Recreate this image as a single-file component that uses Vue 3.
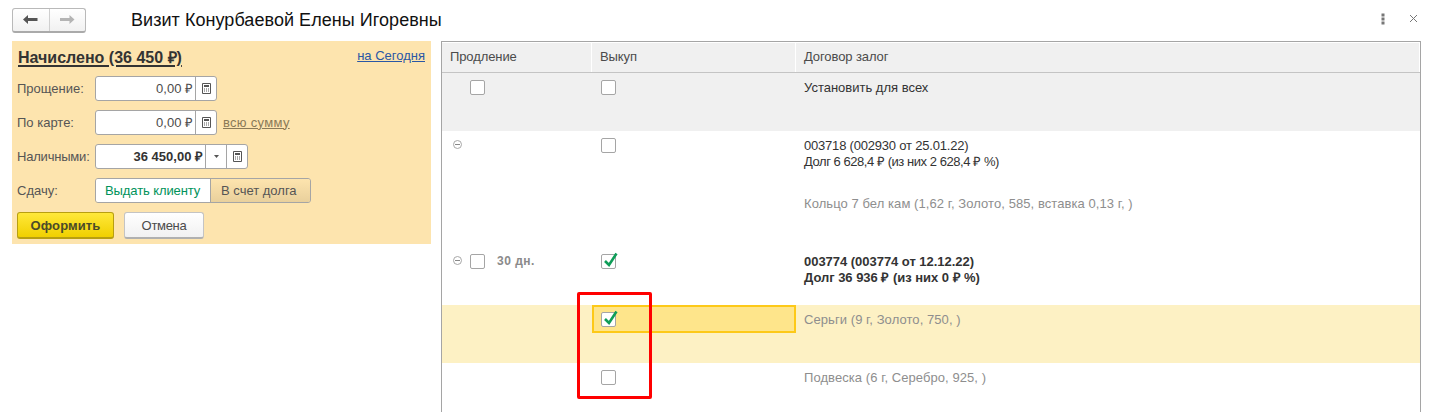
<script setup>
</script>

<template>
  <div class="page">
    <header class="top">
      <div class="nav">
        <button class="nav-btn">
          <svg width="15" height="9" viewBox="0 0 15 9"><path d="M0 4.5 L5 0 V3 H14.5 V6 H5 V9 Z" fill="#555" /></svg>
        </button>
        <button class="nav-btn">
          <svg width="15" height="9" viewBox="0 0 15 9"><path d="M14.5 4.5 L9.5 0 V3 H0 V6 H9.5 V9 Z" fill="#b4b4b4" /></svg>
        </button>
      </div>
      <h1 class="title">Визит Конурбаевой Елены Игоревны</h1>
      <div class="win">
        <svg width="4" height="12" viewBox="0 0 4 12"><path d="M0.5 0.5h3v3h-3zM0.5 4.5h3v3h-3zM0.5 8.5h3v3h-3z" fill="#777" /></svg>
        <svg width="9" height="9" viewBox="0 0 9 9"><path d="M1 1 L8 8 M8 1 L1 8" stroke="#777" stroke-width="1" fill="none" /></svg>
      </div>
    </header>

    <main class="content">
      <section class="pay">
        <div class="pay-head">
          <span class="accrued">Начислено (36 450 ₽)</span>
          <a class="today">на Сегодня</a>
        </div>

        <div class="form-row">
          <span class="lbl">Прощение:</span>
          <div class="field w-short">
            <span class="val">0,00 ₽</span>
            <span class="fbtn"><svg class="calc" viewBox="0 0 9 11"><path d="M0.5 0.5h8v10h-8z" fill="none" stroke="#555" /><path d="M2 2h5v2H2zM2 5.5h1v1H2zM4 5.5h1v1H4zM6 5.5h1v1H6zM2 7.5h1v1H2zM4 7.5h1v1H4zM6 7.5h1v1H6z" fill="#555" /></svg></span>
          </div>
        </div>

        <div class="form-row">
          <span class="lbl">По карте:</span>
          <div class="field w-short">
            <span class="val">0,00 ₽</span>
            <span class="fbtn"><svg class="calc" viewBox="0 0 9 11"><path d="M0.5 0.5h8v10h-8z" fill="none" stroke="#555" /><path d="M2 2h5v2H2zM2 5.5h1v1H2zM4 5.5h1v1H4zM6 5.5h1v1H6zM2 7.5h1v1H2zM4 7.5h1v1H4zM6 7.5h1v1H6z" fill="#555" /></svg></span>
          </div>
          <a class="all">всю сумму</a>
        </div>

        <div class="form-row">
          <span class="lbl lbl-tight">Наличными:</span>
          <div class="field w-long">
            <span class="val bold">36 450,00 ₽</span>
            <span class="fbtn"><svg width="5" height="3" viewBox="0 0 5 3"><path d="M0 0h5L2.5 3z" fill="#555" /></svg></span>
            <span class="fbtn"><svg class="calc" viewBox="0 0 9 11"><path d="M0.5 0.5h8v10h-8z" fill="none" stroke="#555" /><path d="M2 2h5v2H2zM2 5.5h1v1H2zM4 5.5h1v1H4zM6 5.5h1v1H6zM2 7.5h1v1H2zM4 7.5h1v1H4zM6 7.5h1v1H6z" fill="#555" /></svg></span>
          </div>
        </div>

        <div class="form-row">
          <span class="lbl">Сдачу:</span>
          <div class="toggle">
            <span class="opt on">Выдать клиенту</span>
            <span class="opt off">В счет долга</span>
          </div>
        </div>

        <div class="actions">
          <button class="primary">Оформить</button>
          <button class="cancel">Отмена</button>
        </div>
      </section>

      <section class="table">
        <div class="thead">
          <div class="th">Продление</div>
          <div class="th">Выкуп</div>
          <div class="th last">Договор залог</div>
        </div>

        <div class="row r-all">
          <div class="c1"><span class="cb cb-all"></span></div>
          <div class="c2"><span class="cb"></span></div>
          <div class="c3 dark">Установить для всех</div>
        </div>

        <div class="row r-a">
          <div class="c1"><span class="minus"></span></div>
          <div class="c2"><span class="cb"></span></div>
          <div class="c3">
            <div class="dark num">003718 (002930 от 25.01.22)</div>
            <div class="dark debt">Долг 6 628,4 ₽ (из них 2 628,4 ₽ %)</div>
            <div class="grey item-a">Кольцо 7 бел кам (1,62 г, Золото, 585, вставка 0,13 г, )</div>
          </div>
        </div>

        <div class="row r-b">
          <div class="c1">
            <span class="minus"></span>
            <span class="cb cb-in"></span>
            <b class="days">30 дн.</b>
          </div>
          <div class="c2">
            <span class="cb">
              <svg class="tick" viewBox="0 0 16 15"><path d="M3 9 L7 13 L14.5 1.5" fill="none" stroke="#0f9d58" stroke-width="2.6" /></svg>
            </span>
          </div>
          <div class="c3 strong">003774 (003774 от 12.12.22)<br />Долг 36 936 ₽ (из них 0 ₽ %)</div>
        </div>

        <div class="row r-sel">
          <div class="c1"></div>
          <div class="c2 current">
            <span class="cb">
              <svg class="tick" viewBox="0 0 16 15"><path d="M3 9 L7 13 L14.5 1.5" fill="none" stroke="#0f9d58" stroke-width="2.6" /></svg>
            </span>
          </div>
          <div class="c3 grey sel-text">Серьги (9 г, Золото, 750, )</div>
        </div>

        <div class="row r-last">
          <div class="c1"></div>
          <div class="c2"><span class="cb"></span></div>
          <div class="c3 grey">Подвеска (6 г, Серебро, 925, )</div>
        </div>
      </section>
    </main>

    <div class="highlight"></div>
  </div>
</template>

<style>
html, body { margin: 0; background: #fff; overflow: hidden; }
</style>

<style scoped>
.page {
  position: relative;
  width: 1439px;
  height: 412px;
  overflow: hidden;
  background: #fff;
  font-family: "Liberation Sans", Arial, sans-serif;
  font-size: 13px;
  color: #4b4b4b;
}
.top { display: flex; align-items: center; height: 41px; padding-left: 12px; box-sizing: border-box; }
.nav {
  display: flex; width: 74px; height: 25px; box-sizing: border-box;
  border: 1px solid #b9b9b9; border-bottom: 2px solid #aaa; border-radius: 3px;
  background: linear-gradient(#fff, #f1f1f1); margin-top: -1px;
}
.nav-btn { flex: 1; border: 0; padding: 0; background: none; display: flex; align-items: center; justify-content: center; }
.nav-btn + .nav-btn { border-left: 1px solid #cfcfcf; }
.title { margin: 0 0 0 45px; font-size: 18px; font-weight: 400; color: #111; white-space: nowrap; letter-spacing: 0.05px; }
.win { margin-left: auto; display: flex; align-items: center; gap: 24px; padding-right: 21px; margin-top: -4px; }

.content { display: flex; align-items: flex-start; padding-left: 12px; gap: 10px; }

.pay { width: 419px; height: 203px; background: #fde4ae; box-sizing: border-box; padding: 0 5px; flex: none; }
.pay-head { display: flex; justify-content: space-between; align-items: center; height: 30px; padding: 2px 1px 0; box-sizing: border-box; }
.accrued { font-size: 16px; font-weight: 700; color: #333; text-decoration: underline; text-decoration-thickness: 2px; text-underline-offset: 2px; }
.today { color: #2a57a5; text-decoration: underline; margin-bottom: 3px; }
.form-row { display: flex; align-items: center; height: 34px; }
.lbl { width: 78px; flex: none; color: #555; }
.lbl-tight { letter-spacing: -0.2px; }
.field {
  display: flex; height: 25px; box-sizing: border-box; background: #fff;
  border: 1px solid #a5a5a5; border-radius: 3px;
}
.w-short { width: 122px; }
.w-long { width: 153px; }
.val { flex: 1; text-align: right; line-height: 23px; padding-right: 2px; color: #4b4b4b; white-space: nowrap; }
.bold { font-weight: 700; color: #333; }
.fbtn { flex: none; width: 20px; border-left: 1px solid #a5a5a5; display: flex; align-items: center; justify-content: center; }
.calc { width: 9px; height: 11px; }
.all { margin-left: 6px; color: #8a7a58; text-decoration: underline; letter-spacing: 0.3px; }
.toggle { display: flex; height: 25px; box-sizing: border-box; border: 1px solid #a5a5a5; border-radius: 3px; overflow: hidden; }
.opt { line-height: 23px; white-space: nowrap; box-sizing: border-box; }
.on { background: #fff; color: #00925a; width: 114px; padding-left: 9px; letter-spacing: -0.1px; }
.off { background: linear-gradient(#fde4ae, #e9d09c); border-left: 1px solid #a5a5a5; color: #555; width: 100px; padding-left: 10px; }
.actions { display: flex; gap: 10px; margin-top: 5px; }
.primary, .cancel { height: 27px; border-radius: 3px; box-sizing: border-box; font: inherit; padding: 0; }
.primary {
  width: 97px; font-weight: 700; color: #4b4b29; letter-spacing: 0.1px;
  background: linear-gradient(#ffe83a, #f0d000); border: 1px solid #b89f10; border-bottom-width: 2px;
}
.cancel {
  width: 80px; color: #4b4b4b; letter-spacing: -0.3px;
  background: linear-gradient(#fff, #f1f1f1); border: 1px solid #c4c4c4; border-bottom: 2px solid #b0b0b0;
}

.table { flex: none; width: 980px; border: 1px solid #a5a5a5; border-bottom: 0; box-sizing: border-box; height: 371px; overflow: hidden; }
.thead { display: grid; grid-template-columns: 150px 204px 1fr; height: 31px; box-sizing: border-box; background: #f0f0f0; border-bottom: 1px solid #c4c4c4; }
.th { line-height: 30px; padding-left: 8px; border-right: 1px solid #fff; box-sizing: border-box; color: #4b4b4b; letter-spacing: -0.1px; box-shadow: inset 0 1px 0 #fff; }
.row { display: grid; grid-template-columns: 150px 204px 1fr; box-sizing: border-box; }
.c1 { display: flex; align-items: flex-start; }
.c2 { display: flex; align-items: flex-start; padding-left: 9px; }
.c3 { padding-left: 8px; line-height: 16px; white-space: nowrap; }
.r-all { height: 58px; background: #f0f0f0; padding-top: 7px; }
.r-a { height: 114px; padding-top: 7px; }
.r-b { height: 60px; padding-top: 9px; }
.r-sel { height: 58px; background: #fdf1c4; }
.r-last { padding-top: 7px; height: 60px; }
.dark { color: #333; }
.strong { font-weight: 700; color: #333; letter-spacing: -0.03px; }
.grey { color: #8e8e8e; letter-spacing: 0.07px; }
.num { letter-spacing: -0.2px; }
.debt { letter-spacing: -0.45px; }
.item-a { margin-top: 26px; }
.sel-text { margin-top: 7px; }
.cb {
  position: relative; display: block; flex: none; width: 15px; height: 15px; box-sizing: border-box;
  border: 1px solid #a5a5a5; border-radius: 2px; background: #fff;
}
.cb-all { margin-left: 28px; }
.cb-in { margin-left: 8px; }
.minus {
  position: relative; display: block; flex: none; width: 9px; height: 9px; margin: 2px 0 0 11px; box-sizing: border-box;
  border: 1px solid #a8a8a8; border-radius: 50%;
}
.minus::after { content: ""; position: absolute; left: 1px; right: 1px; top: 3px; height: 1px; background: #888; }
.days { margin-left: 12px; color: #8a8a8a; font-size: 12px; line-height: 14px; letter-spacing: 0.5px; }
.tick { position: absolute; left: 0; top: -3px; width: 16px; height: 15px; overflow: visible; }
.current {
  height: 28px; padding-top: 5px; box-sizing: border-box; padding-left: 7px; align-self: start;
  background: #fee58b; border: 2px solid #fdc918; width: 204px;
}
.highlight {
  position: absolute; left: 577px; top: 292px; width: 75px; height: 107px; box-sizing: border-box;
  border: 3px solid #f00; border-radius: 2px; pointer-events: none;
}
</style>
